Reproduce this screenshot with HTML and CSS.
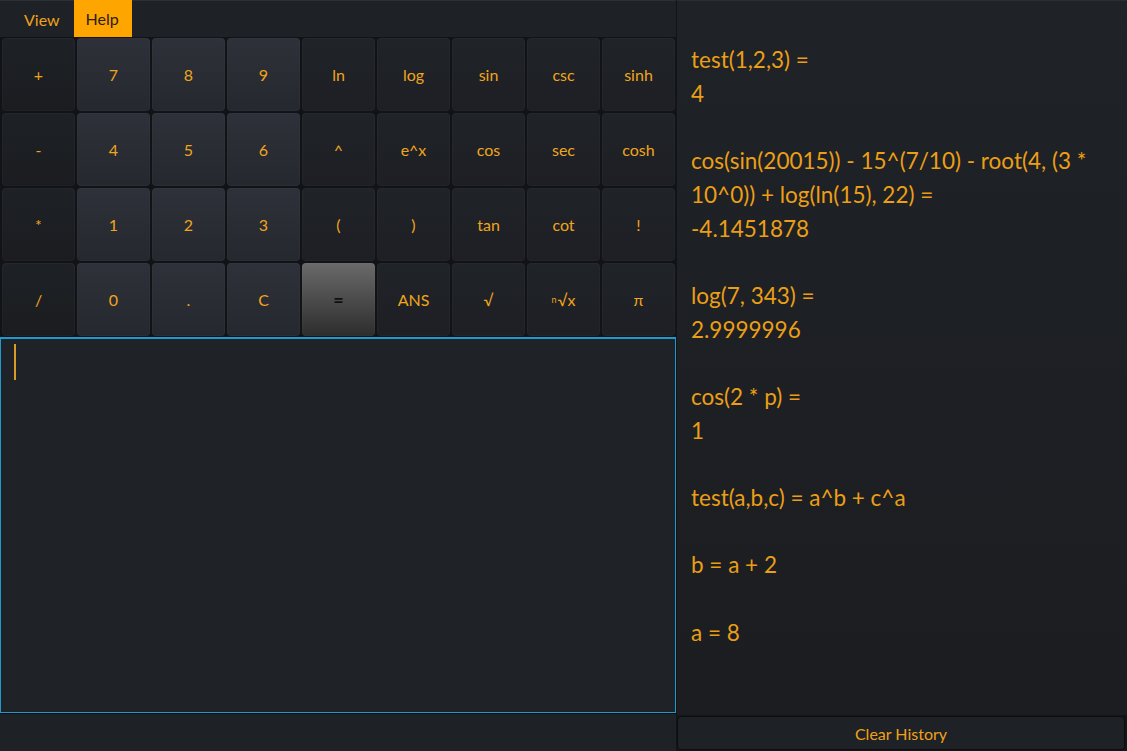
FILE: index.html
```html
<!DOCTYPE html>
<html>
<head>
<meta charset="utf-8">
<link rel="stylesheet" href="styles.css">
</head>
<body>
<div class="app">
  <div class="left">
    <div class="menubar">
      <span class="menu">View</span>
      <span class="menu active">Help</span>
    </div>
    <div class="keypad">
      <div class="key op">+</div><div class="key num">7</div><div class="key num">8</div><div class="key num">9</div><div class="key fn">ln</div><div class="key fn">log</div><div class="key fn">sin</div><div class="key fn">csc</div><div class="key fn">sinh</div>
      <div class="key op">-</div><div class="key num">4</div><div class="key num">5</div><div class="key num">6</div><div class="key fn">^</div><div class="key fn">e^x</div><div class="key fn">cos</div><div class="key fn">sec</div><div class="key fn">cosh</div>
      <div class="key op">*</div><div class="key num">1</div><div class="key num">2</div><div class="key num">3</div><div class="key fn">(</div><div class="key fn">)</div><div class="key fn">tan</div><div class="key fn">cot</div><div class="key fn">!</div>
      <div class="key op">/</div><div class="key num">0</div><div class="key num">.</div><div class="key num">C</div><div class="key eq">=</div><div class="key fn">ANS</div><div class="key fn">√</div><div class="key fn"><span class="sup">n</span>√x</div><div class="key fn">π</div>
    </div>
    <div class="input"><span class="caret"></span></div>
    <div class="footer"></div>
  </div>
  <div class="right">
    <div class="history">
      <p>test(1,2,3) =<br>4</p>
      <p>cos(sin(20015)) - 15^(7/10) - root(4, (3 * 10^0)) + log(ln(15), 22) =<br>-4.1451878</p>
      <p>log(7, 343) =<br>2.9999996</p>
      <p>cos(2 * p) =<br>1</p>
      <p>test(a,b,c) = a^b + c^a</p>
      <p>b = a + 2</p>
      <p>a = 8</p>
    </div>
    <div class="clear">Clear History</div>
  </div>
</div>
</body>
</html>
```
FILE: styles.css
```css
html, body {
  margin: 0;
  padding: 0;
  background: #1e2125;
  font-family: "Lato", "Open Sans", sans-serif;
  color: #eea21a;
}
.app {
  display: flex;
  width: 1127px;
  height: 751px;
  background: #141619;
}
.left {
  width: 676px;
  display: flex;
  flex-direction: column;
}
.menubar {
  height: 36px;
  display: flex;
  align-items: stretch;
  background: #1e2125;
  border-top: 1px solid #2c3036;
  padding-left: 11px;
}
.menu {
  display: flex;
  align-items: center;
  padding: 0 13px;
  font-size: 16px;
  color: #eea21a;
}
.menu.active {
  background: #ffa500;
  color: #2a2116;
  padding: 0 13px 0 12px;
  margin-left: 1px;
  margin-top: -1px;
}
.keypad {
  display: grid;
  grid-template-columns: repeat(9, 73px);
  grid-auto-rows: 73px;
  gap: 2px;
  padding: 1px 0 1px 2px;
  background: #111316;
}
.key {
  display: flex;
  align-items: center;
  justify-content: center;
  border-radius: 4px;
  font-size: 16px;
  color: #f0a51c;
  box-shadow: inset 0 0 0 1px rgba(255,255,255,0.025);
}
.key.op {
  background: linear-gradient(#1e2125, #1a1c20);
}
.key.num {
  background: linear-gradient(#2e3139, #25282e);
}
.key.fn {
  background: linear-gradient(#202328, #1d1f24);
}
.key.eq {
  background: linear-gradient(#6a6a6a, #2d2d2d);
  color: #111;
  font-size: 18px;
  font-weight: bold;
}
.sup {
  font-size: 9px;
  vertical-align: 7px;
  margin-right: 1px;
}
.input {
  height: 374px;
  border: 1px solid #1e9ad0;
  border-top-width: 2px;
  height: 373px;
  background: #1f2227;
  position: relative;
}
.caret {
  position: absolute;
  left: 13px;
  top: 5px;
  width: 2px;
  height: 36px;
  background: #d99a2a;
}
.footer {
  height: 37px;
  background: #1e2125;
  border-top: 1px solid #0c0d0f;
}
.right {
  width: 450px;
  display: flex;
  flex-direction: column;
  border-left: 1px solid #121417;
}
.history {
  flex: 1;
  background: linear-gradient(#1f2226, #1b1d21);
  padding: 42px 20px 0 14px;
  font-size: 22.5px;
  line-height: 33.7px;
  color: #eb9f16;
  border-top: 1px solid #2a2d33;
}
.history p {
  margin: 0 0 33.7px 0;
}
.clear {
  height: 32px;
  margin: 1px 2px 1px 0;
  border-radius: 4px;
  background: #1e2125;
  border: 1px solid #0c0d0f;
  display: flex;
  align-items: center;
  justify-content: center;
  font-size: 16px;
  color: #eea21a;
}
```
